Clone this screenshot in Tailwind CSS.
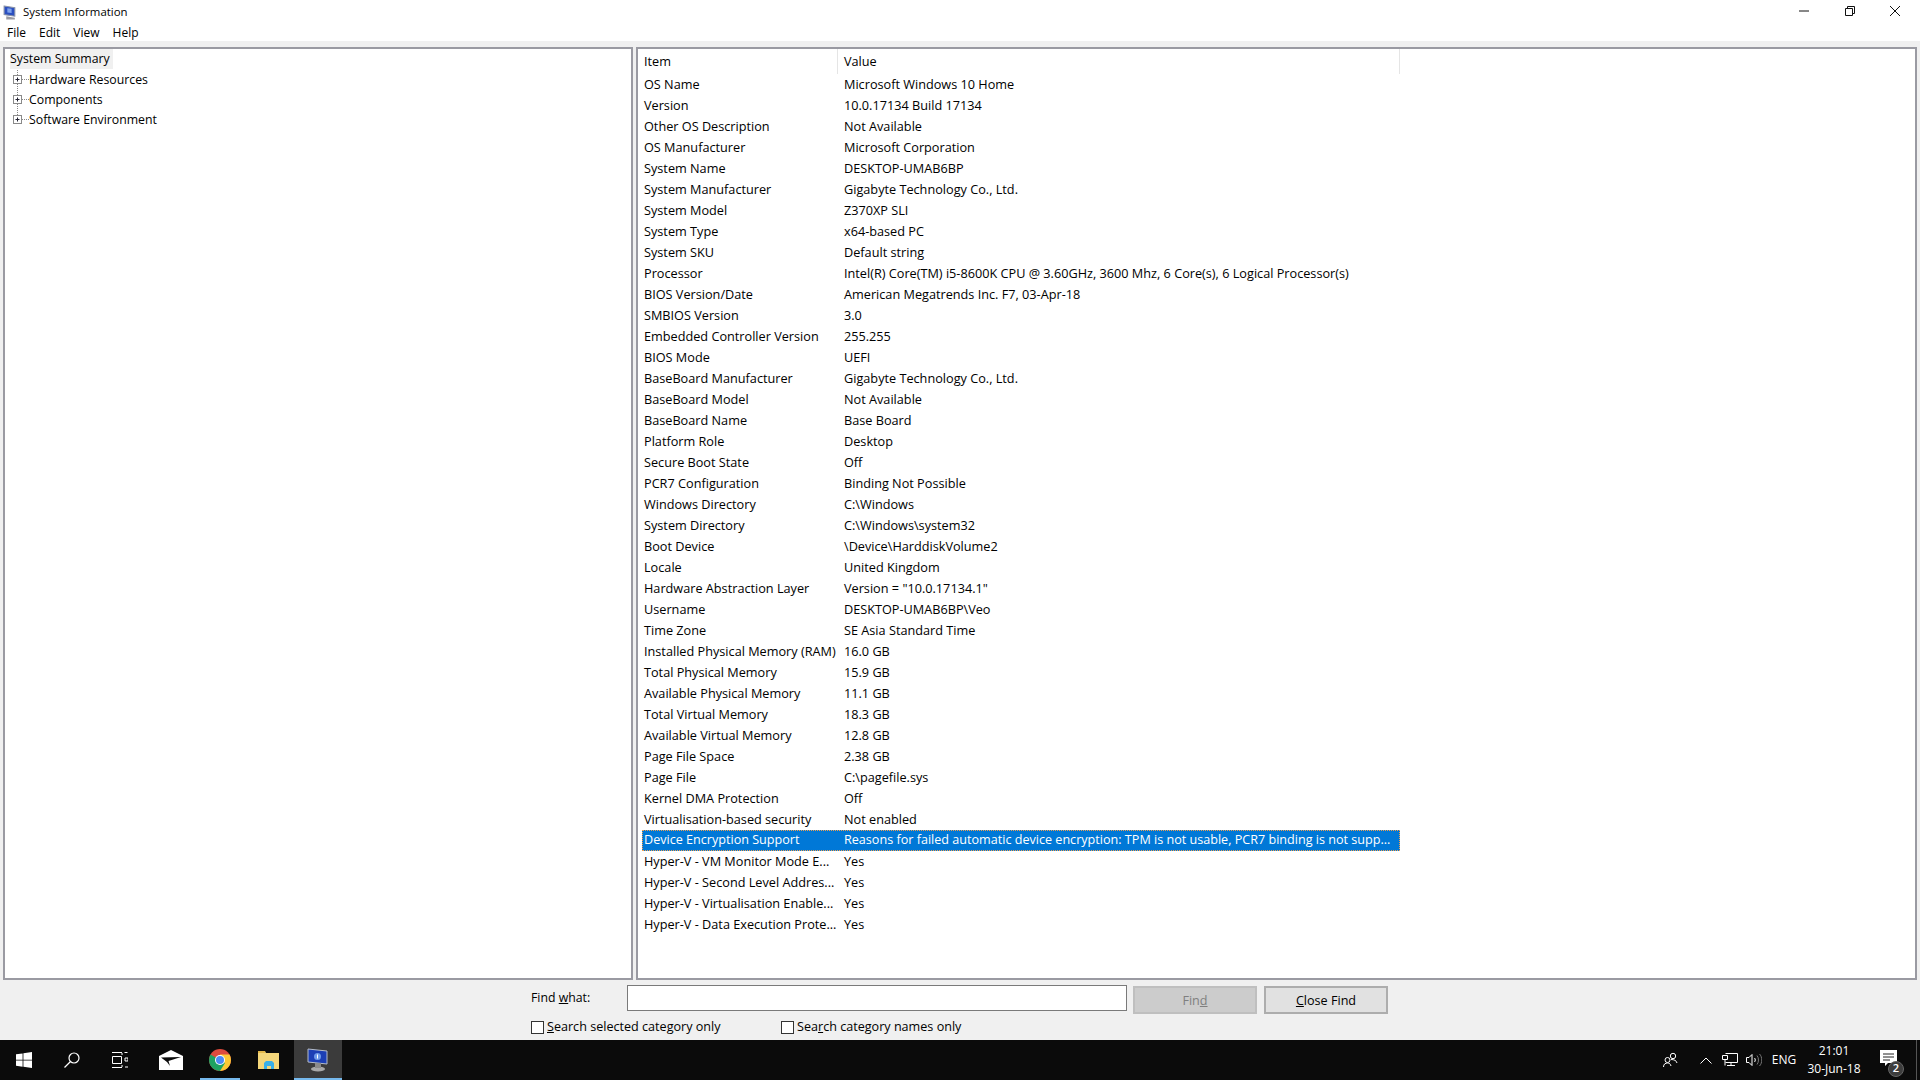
<!DOCTYPE html>
<html lang="en">
<head>
  <meta charset="UTF-8">
  <title>System Information</title>
  <script src="https://cdn.jsdelivr.net/npm/@tailwindcss/browser@4"></script>
</head>
<body class="bg-[#f0f0f0] font-['Open_Sans',sans-serif] text-[12.7px] text-black">
<div class="flex flex-col h-[1080px] w-[1920px] overflow-hidden">

  <!-- Title bar -->
  <div class="flex items-center h-6 bg-white shrink-0">
    <svg class="ml-[3px] mt-[1px] w-[14px] h-[15px]" viewBox="0 0 13 14"><path d="M1 1l10 1.500v8L1 9z" fill="#2a4fc0" stroke="#8a93a8"/><path d="M3 10.500l8 1.500v1.500H3z" fill="#9a9aa2"/><path d="M4 3l4 .5v4L4 7z" fill="#7ea3ee"/></svg>
    <span class="ml-[6px] text-[11.4px]">System Information</span>
    <div class="ml-auto flex items-center -mt-[3px]">
      <div class="w-[46px] ml-[1px] flex justify-center"><svg class="w-[10px] h-[10px]" viewBox="0 0 10 10"><path d="M0 5h10" stroke="#111" fill="none"/></svg></div>
      <div class="w-[45px] flex justify-center"><svg class="w-[10px] h-[10px]" viewBox="0 0 10 10"><path d="M.500 2.500h7v7h-7zM2.500 2.500v-2h7v7h-2" stroke="#111" fill="none"/></svg></div>
      <div class="w-[46px] mr-[2px] flex justify-center"><svg class="w-[10px] h-[10px]" viewBox="0 0 10 10"><path d="M0 0l10 10M10 0L0 10" stroke="#111" fill="none"/></svg></div>
    </div>
  </div>

  <!-- Menu bar -->
  <div class="flex items-center h-[17px] bg-white shrink-0 pl-[7px] gap-[13px] text-[12px]">
    <span>File</span><span>Edit</span><span>View</span><span>Help</span>
  </div>

  <!-- Panes -->
  <div class="flex pt-[6px] pl-[3px] pr-[3px] gap-[3px] h-[939px] shrink-0">
    <div class="w-[630px] border-2 border-[#9a9aa2] bg-white pl-[5px] text-[12.3px]">
      <div class="w-[103px] h-5 bg-[#f0f0f0] flex items-center whitespace-nowrap">System Summary</div>
      <div class="flex items-center h-5 mt-[1px]"><svg class="ml-[3px] w-[17px] h-5" viewBox="0 0 17 20"><path d="M4.500 0v5M4.500 14v6M9 9.500h7" stroke="#888" stroke-dasharray="1 1" fill="none"/><rect x=".5" y="5.500" width="8" height="8" fill="#fff" stroke="#8a8a8a"/><path d="M2.500 9.500h4M4.500 7.500v4" stroke="#223" fill="none"/></svg><span class="-ml-[1px]">Hardware Resources</span></div>
      <div class="flex items-center h-5"><svg class="ml-[3px] w-[17px] h-5" viewBox="0 0 17 20"><path d="M4.500 0v5M4.500 14v6M9 9.500h7" stroke="#888" stroke-dasharray="1 1" fill="none"/><rect x=".5" y="5.500" width="8" height="8" fill="#fff" stroke="#8a8a8a"/><path d="M2.500 9.500h4M4.500 7.500v4" stroke="#223" fill="none"/></svg><span class="-ml-[1px]">Components</span></div>
      <div class="flex items-center h-5"><svg class="ml-[3px] w-[17px] h-5" viewBox="0 0 17 20"><path d="M4.500 0v5M9 9.500h7" stroke="#888" stroke-dasharray="1 1" fill="none"/><rect x=".5" y="5.500" width="8" height="8" fill="#fff" stroke="#8a8a8a"/><path d="M2.500 9.500h4M4.500 7.500v4" stroke="#223" fill="none"/></svg><span class="-ml-[1px]">Software Environment</span></div>
    </div>
    <div class="flex-1 border-2 border-[#9a9aa2] bg-white pl-[4px]">
      <!-- Column headers -->
      <div class="flex w-[758px] h-[25px] items-center">
        <div class="w-[196px] pl-[2px] h-full flex items-center border-r border-[#e5e5e5]">Item</div>
        <div class="flex-1 pl-[6px] h-full flex items-center border-r border-[#e5e5e5]">Value</div>
      </div>
      <div id="rows"></div>
    </div>
  </div>

  <!-- Find bar -->
  <div class="flex flex-col h-[60px] shrink-0 pl-[531px] pt-[5px] text-[12.6px]">
    <div class="flex items-start h-[30px]">
      <span class="w-[96px] pt-[4px] text-[12.3px]">Find <u>w</u>hat:</span>
      <div class="w-[500px] h-[26px] bg-white border border-[#7a7a7a]"></div>
      <div class="ml-[6px] mt-[1px] w-[124px] h-[28px] pt-[2px] bg-[#cccccc] border-2 border-[#bfbfbf] flex items-center justify-center text-[#7f7f7f]"><span>Fin<u>d</u></span></div>
      <div class="ml-[7px] mt-[1px] w-[124px] h-[28px] pt-[2px] bg-[#e1e1e1] border-2 border-[#adadad] flex items-center justify-center"><span><u>C</u>lose Find</span></div>
    </div>
    <div class="flex items-center h-[20px] mt-[2px]">
      <div class="w-[13px] h-[13px] bg-white border border-[#333]"></div>
      <span class="ml-[3px] w-[234px]"><u>S</u>earch selected category only</span>
      <div class="w-[13px] h-[13px] bg-white border border-[#333]"></div>
      <span class="ml-[3px]">Sea<u>r</u>ch category names only</span>
    </div>
  </div>

  <!-- Taskbar -->
  <div class="flex h-10 bg-[#0b0b0b] text-white shrink-0 text-[12px]">
    <div class="w-12 flex items-center justify-center"><svg class="w-4 h-4" viewBox="0 0 16 16"><path d="M0 2.300l6.600-.9v6.300H0zM7.400 1.300L16 0v7.700H7.400zM0 8.400h6.600v6.300L0 13.800zM7.400 8.400H16V16l-8.600-1.200z" fill="#fff"/></svg></div>
    <div class="w-12 flex items-center justify-center"><svg class="w-4 h-4" viewBox="0 0 16 16"><circle cx="10" cy="6" r="5" stroke="#fff" stroke-width="1.200" fill="none"/><path d="M6.500 9.500L.5 15.500" stroke="#fff" stroke-width="1.300" fill="none"/></svg></div>
    <div class="w-12 flex items-center justify-center"><svg class="w-4 h-4" viewBox="0 0 16 16"><path d="M0 .5h10M0 15.500h10M.5 4.500h9v7h-9z" stroke="#fff" fill="none"/><path d="M10 1v2M10 13v2M12.500 .5h3M13 6h3v3h-3zM13 15h3" stroke="#fff" fill="none"/></svg></div>
    <div class="w-[54px] mr-[2px] flex items-center justify-center"><svg class="w-6 h-5" viewBox="0 0 24 20"><path d="M0 6L12 0l12 6v14H0z" fill="#fff"/><path d="M2 7.500l20-.5-12.500 4 1.500 5-3-4z" fill="#0b0b0b"/></svg></div>
    <div class="w-10 flex items-center justify-center relative">
      <svg class="w-[22px] h-[22px]" viewBox="0 0 22 22"><circle cx="11" cy="11" r="11" fill="#dd4b3e"/><path d="M11 22A11 11 0 0 0 20.500 5.500H11z" fill="#fcc934"/><path d="M11 11L1.500 5.500A11 11 0 0 0 11 22l5-8z" fill="#1ea362"/><circle cx="11" cy="11" r="5" fill="#fff"/><circle cx="11" cy="11" r="4" fill="#4c8bf5"/></svg>
      <div class="absolute bottom-0 left-0 right-0 h-[2px] bg-[#76b9ed]"></div>
    </div>
    <div class="w-[54px] pl-[3px] flex items-center justify-center"><svg class="w-[22px] h-5" viewBox="0 0 22 20"><path d="M0 1h7l1 2h13v16H0z" fill="#f5d77a"/><path d="M0 1h7v2H0z" fill="#e5b94a"/><path d="M6 19v-6l2-2h6l2 2v6h-3v-3H9v3z" fill="#3ab0e8"/></svg></div>
    <div class="w-12 pr-[2px] flex items-center justify-center bg-[#3b3b3b] relative">
      <svg class="w-[21px] h-[24px]" viewBox="0 0 21 24"><path d="M1 1l19 2v13L1 14z" fill="#1c3fb5" stroke="#b5bcc8"/><circle cx="10.500" cy="8.500" r="3.500" fill="#6f9bea"/><path d="M10 6.500h1v4h-1z" fill="#fff"/><ellipse cx="11" cy="21" rx="7" ry="2.500" fill="#a8a8a8"/><path d="M8 15h6v5H8z" fill="#8a8a8a"/></svg>
      <div class="absolute bottom-0 left-0 right-0 h-[2px] bg-[#76b9ed]"></div>
    </div>

    <!-- Tray -->
    <div class="ml-auto flex items-center">
      <div class="w-10 flex justify-center"><svg class="w-[15px] h-4" viewBox="0 0 15 16"><circle cx="10" cy="4" r="2.700" stroke="#fff" fill="none"/><circle cx="4.500" cy="8" r="2.500" stroke="#fff" fill="none"/><path d="M.5 15c0-3 2-4 4-4s3 1 3.500 3M8 7.500c3 0 5.500 1 6 3.500" stroke="#fff" fill="none"/></svg></div>
      <div class="w-6 ml-1 flex justify-center"><svg class="w-3 h-[7px]" viewBox="0 0 12 7"><path d="M.5 6.500L6 1l5.500 5.500" stroke="#fff" fill="none"/></svg></div>
      <div class="w-6 flex justify-center"><svg class="w-4 h-[14px]" viewBox="0 0 16 14"><path d="M3.500 .5h12v9h-12M.5 2.500h5v4h-5zM9 9.500v3M5 12.500h8M3 6.500v6" stroke="#fff" fill="none"/></svg></div>
      <div class="w-6 flex justify-center"><svg class="w-4 h-[14px]" viewBox="0 0 16 14"><path d="M.5 4.500h2.500l3-3v11l-3-3H.5z" stroke="#fff" fill="none"/><path d="M8.500 5c1 1 1 3 0 4" stroke="#fff" fill="none"/><path d="M11 2.500c2 2.500 2 6.500 0 9M13.500 1c3 3 3 9 0 12" stroke="#777" fill="none"/></svg></div>
      <div class="w-9 text-center">ENG</div>
      <div class="w-16 text-center leading-[18px]"><div>21:01</div><div>30-Jun-18</div></div>
      <div class="w-[50px] flex justify-center relative">
        <svg class="w-[17px] h-[17px] -mt-[4px] -ml-[5px]" viewBox="0 0 17 17"><path d="M0 0h17v13H8l-3 3v-3H0z" fill="#fff"/><path d="M3 4h11M3 7h11M3 10h7" stroke="#222" fill="none"/></svg>
        <div class="absolute left-[22px] top-[7px] w-4 h-4 rounded-full bg-[#3d3d3d] border border-[#666] flex items-center justify-center text-[11px] font-semibold">2</div>
      </div>
      <div class="w-1 h-full border-l border-[#555]"></div>
    </div>
  </div>
</div>

<script>
  // Rows of the system summary table
  const rows = [
    ['OS Name', 'Microsoft Windows 10 Home'],
    ['Version', '10.0.17134 Build 17134'],
    ['Other OS Description', 'Not Available'],
    ['OS Manufacturer', 'Microsoft Corporation'],
    ['System Name', 'DESKTOP-UMAB6BP'],
    ['System Manufacturer', 'Gigabyte Technology Co., Ltd.'],
    ['System Model', 'Z370XP SLI'],
    ['System Type', 'x64-based PC'],
    ['System SKU', 'Default string'],
    ['Processor', 'Intel(R) Core(TM) i5-8600K CPU @ 3.60GHz, 3600 Mhz, 6 Core(s), 6 Logical Processor(s)'],
    ['BIOS Version/Date', 'American Megatrends Inc. F7, 03-Apr-18'],
    ['SMBIOS Version', '3.0'],
    ['Embedded Controller Version', '255.255'],
    ['BIOS Mode', 'UEFI'],
    ['BaseBoard Manufacturer', 'Gigabyte Technology Co., Ltd.'],
    ['BaseBoard Model', 'Not Available'],
    ['BaseBoard Name', 'Base Board'],
    ['Platform Role', 'Desktop'],
    ['Secure Boot State', 'Off'],
    ['PCR7 Configuration', 'Binding Not Possible'],
    ['Windows Directory', 'C:\\Windows'],
    ['System Directory', 'C:\\Windows\\system32'],
    ['Boot Device', '\\Device\\HarddiskVolume2'],
    ['Locale', 'United Kingdom'],
    ['Hardware Abstraction Layer', 'Version = "10.0.17134.1"'],
    ['Username', 'DESKTOP-UMAB6BP\\Veo'],
    ['Time Zone', 'SE Asia Standard Time'],
    ['Installed Physical Memory (RAM)', '16.0 GB'],
    ['Total Physical Memory', '15.9 GB'],
    ['Available Physical Memory', '11.1 GB'],
    ['Total Virtual Memory', '18.3 GB'],
    ['Available Virtual Memory', '12.8 GB'],
    ['Page File Space', '2.38 GB'],
    ['Page File', 'C:\\pagefile.sys'],
    ['Kernel DMA Protection', 'Off'],
    ['Virtualisation-based security', 'Not enabled'],
    ['Device Encryption Support', 'Reasons for failed automatic device encryption: TPM is not usable, PCR7 binding is not supp...'],
    ['Hyper-V - VM Monitor Mode E...', 'Yes'],
    ['Hyper-V - Second Level Addres...', 'Yes'],
    ['Hyper-V - Virtualisation Enable...', 'Yes'],
    ['Hyper-V - Data Execution Prote...', 'Yes'],
  ];
  const selected = 36;

  const container = document.getElementById('rows');
  rows.forEach((row, i) => {
    const el = document.createElement('div');
    el.className = i === selected
      ? 'flex w-[758px] h-[21px] items-center bg-[#0078d7] text-white text-[12.6px] outline-1 outline-dotted -outline-offset-1 outline-[#f0a050]'
      : 'flex w-[758px] h-[21px] items-center';
    el.innerHTML = `<div class="w-[202px] pl-[2px] whitespace-nowrap shrink-0">${row[0]}</div><div class="whitespace-nowrap">${row[1]}</div>`;
    container.appendChild(el);
  });
</script>
</body>
</html>
